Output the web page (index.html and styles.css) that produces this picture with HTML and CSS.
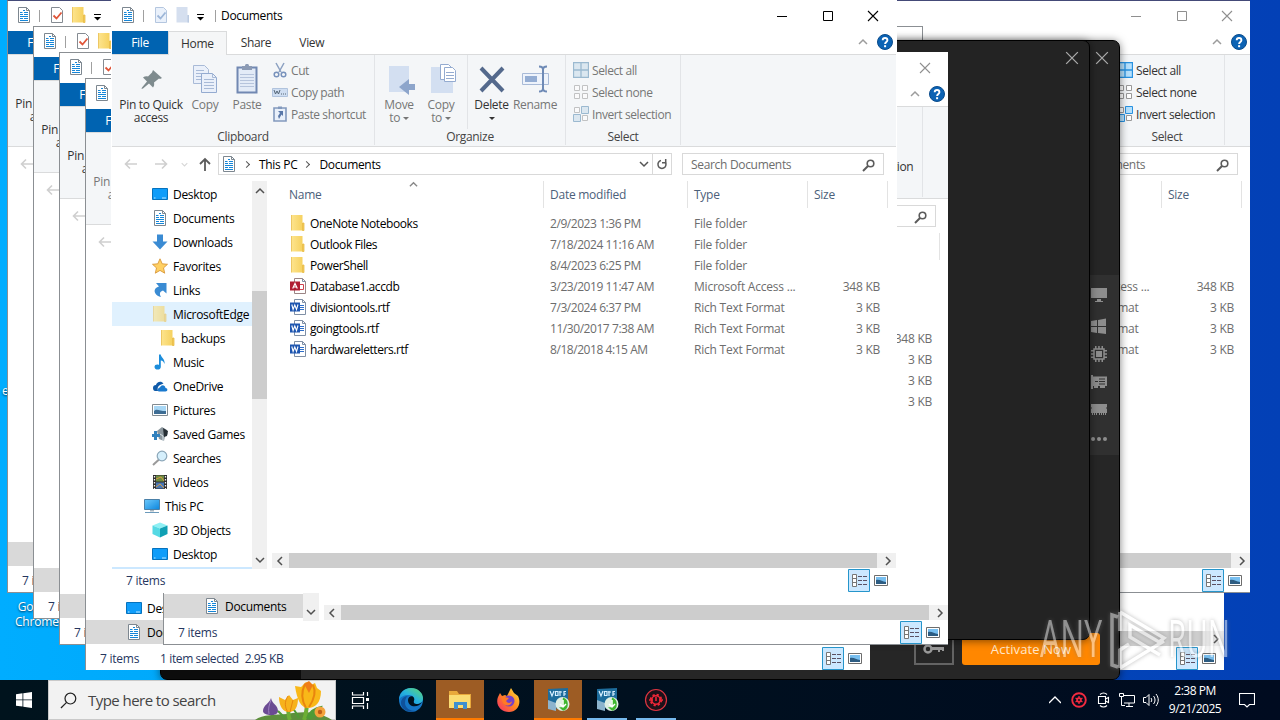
FILE: index.html
```html
<!DOCTYPE html>
<html lang="en">
<head>
<meta charset="UTF-8" />
<meta name="viewport" content="width=device-width, initial-scale=1" />
<title>Documents</title>
<link rel="stylesheet" href="styles.css">
</head>
<body>
  <!-- shared icons -->
  <svg class="sprite" width="0" height="0">
    <defs>
      <linearGradient id="gold" x1="0" x2="1"><stop offset="0" stop-color="#fde48d"/><stop offset="1" stop-color="#f5cf5a"/></linearGradient>
      <linearGradient id="sky" x1="0" y1="0" x2="1" y2="1"><stop offset="0" stop-color="#6cc8fb"/><stop offset="1" stop-color="#0b86de"/></linearGradient>
      <linearGradient id="edge1" x1="0" y1="1" x2="1" y2="0"><stop offset="0" stop-color="#1385dc"/><stop offset=".5" stop-color="#27b4dd"/><stop offset="1" stop-color="#62d86b"/></linearGradient>
      <linearGradient id="fire" x1="1" y1="0" x2="0" y2="1"><stop offset="0" stop-color="#ffe43f"/><stop offset=".5" stop-color="#ff8420"/><stop offset="1" stop-color="#f5286f"/></linearGradient>
    </defs>
    <symbol id="i-doc" viewBox="0 0 16 16"><path d="M2.500 .5h8l3 3v12h-11z" fill="#fff" stroke="#7d8790"/><path d="M10.500 .5v3h3" fill="none" stroke="#7d8790"/><path d="M4 5.500h2.500M8 5.500h4M4 7.500h3M8 7.500h4M4 9.500h8M4 11.500h3M8 11.500h4M4 13.500h8M7 3.500h2" stroke="#1586d8" stroke-width="1.200"/></symbol>
    <symbol id="i-folder" viewBox="0 0 16 16"><path d="M1.500 0h11v8h1.500v7.500H1.500z" fill="url(#gold)"/><path d="M1.500 0v15.500M12.500 8v7.500h1.500V8z" stroke="#e8bc4b" stroke-width=".8" fill="#f3cb56"/></symbol>
    <symbol id="i-check" viewBox="0 0 16 16"><path d="M2.500 .5h8l3 3v12h-11z" fill="#fff" stroke="#858b92"/><path d="M4.500 8.500l3 3 5-6" fill="none" stroke="#e0563a" stroke-width="1.800"/></symbol>
    <symbol id="i-check-off" viewBox="0 0 16 16"><path d="M2.500 .5h8l3 3v12h-11z" fill="#eaf1fb" stroke="#b4c6df"/><path d="M4.500 8.500l3 3 5-6" fill="none" stroke="#9db6d8" stroke-width="1.800"/></symbol>
    <symbol id="i-folder-off" viewBox="0 0 16 16"><path d="M1.500 0h11v8h1.500v7.500H1.500z" fill="#d5dfef"/><path d="M12.500 8v7.500h1.500V8z" fill="#bccbe2"/></symbol>
    <symbol id="i-desktop" viewBox="0 0 16 16"><path d="M.5 2.500h15v11H.5z" fill="#0f9dfa" stroke="#0672bd"/><path d="M2 12h1.500M10 12h4" stroke="#bde6ff"/></symbol>
    <symbol id="i-down" viewBox="0 0 16 16"><path d="M5 .5h6v7h4.500L8 15.500.5 7.500H5z" fill="#3a8bd3"/></symbol>
    <symbol id="i-star" viewBox="0 0 16 16"><path d="M8 .8l2.200 5 5.300.5-4 3.600 1.200 5.300L8 12.400l-4.700 2.800 1.200-5.300-4-3.600 5.300-.5z" fill="#ffd063" stroke="#d8973b" stroke-width=".9"/></symbol>
    <symbol id="i-link" viewBox="0 0 16 16"><path d="M4 1h10.500v10.500L11 8.500c-3 1-4 3-2 6.500-5-1-8-5.500-5.500-8.500C4.500 5.300 6 5 7 4.500z" fill="#3a8bd3"/></symbol>
    <symbol id="i-music" viewBox="0 0 16 16"><path d="M7 .5h1.800c0 3 4.500 4 3.700 9.500-.6-2-1.700-3.300-3.700-3.500V13c0 3.500-6.300 3.300-6.300 0 0-2.400 2.600-3 4.500-2z" fill="#1c8ddb"/></symbol>
    <symbol id="i-cloud" viewBox="0 0 16 16"><path d="M1 10c0-2 1-3 3-3 .5-3 5-5 7.500-1.500L8 7c-2 1-3 3-2 6H3c-1 0-2-1-2-3z" fill="#0f5aa8"/><path d="M6.500 13.500c-1.500-2 0-4 1.500-4C9 6.500 13 6.500 13.500 10c2.500 0 2.500 3.500 0 3.500z" fill="#1979ce"/></symbol>
    <symbol id="i-pic" viewBox="0 0 16 16"><path d="M.5 2.500h15v11H.5z" fill="#fff" stroke="#828b91"/><path d="M2 4h12v8H2z" fill="#a8d7f5"/><path d="M2 9c3-3 5 0 12 0v3H2z" fill="#3e6d94"/></symbol>
    <symbol id="i-games" viewBox="0 0 16 16"><path d="M5 5l5-4 5 3v3l1 1-3 2-1 5-5-2z" fill="#8b969d"/><path d="M11 2l5 3-1 5-3 1z" fill="#272f35"/><path d="M2 5h3v3h3v3H5v3H2v-3H0V8h2z" fill="#3281bd"/><path d="M8 8l3 2v5" stroke="#dbe5ea" fill="none"/></symbol>
    <symbol id="i-search" viewBox="0 0 16 16"><path d="M7 9.500L1 15" stroke="#9a9a9a" stroke-width="2"/><circle cx="10" cy="6" r="4.800" fill="#d5effc" stroke="#8ba6b8" stroke-width="1.200"/></symbol>
    <symbol id="i-film" viewBox="0 0 16 16"><path d="M1 1h14v14H1z" fill="#2e2e2e"/><path d="M4 1.500h8v6H4z" fill="#6e8c42"/><path d="M4 8.500h8v6H4z" fill="#4a78b6"/><path d="M4 5l5-2 3 4M4 13l4-3 4 4" fill="none" stroke="#d49b43"/><path d="M2.500 2v13M13.500 2v13" stroke="#f3f3f3" stroke-width="1.300" stroke-dasharray="1.500 1.500"/></symbol>
    <symbol id="i-pc" viewBox="0 0 16 16"><path d="M.5 1.500h15v10H.5z" fill="url(#sky)" stroke="#4a80a8"/><path d="M6 12h4v1.500H6z" fill="#a8b6c0"/><path d="M1 14.500h14" stroke="#6c9abb"/></symbol>
    <symbol id="i-cube" viewBox="0 0 16 16"><path d="M8 .5l7.500 3L8 6.500.5 3.500z" fill="#8ff0f4"/><path d="M.5 3.500l7.500 3v9L.5 12z" fill="#55d9e4"/><path d="M15.500 3.500L8 6.500v9l7.500-3.500z" fill="#0fa0b4"/></symbol>
    <symbol id="i-word" viewBox="0 0 16 16"><path d="M4.500.5h8l3 3v12h-11z" fill="#fff" stroke="#7f8fa5"/><path d="M12.500.5v3h3" fill="none" stroke="#7f8fa5"/><path d="M10 6.500h4M10 8.500h4M10 10.500h4" stroke="#2f6fca"/><path d="M0 3.500h10v9H0z" fill="#1d55b0"/><path d="M1.800 5.500l1.300 5 1.700-4.500 1.700 4.500 1.500-5" stroke="#fff" fill="none" stroke-width="1.100"/></symbol>
    <symbol id="i-access" viewBox="0 0 16 16"><path d="M4.500.5h8l3 3v12h-11z" fill="#fff" stroke="#9b8585"/><path d="M12.500.5v3h3" fill="none" stroke="#7f8fa5"/><path d="M10 6.500h3.500v5H10" fill="none" stroke="#cf4250"/><path d="M0 3.500h10v9H0z" fill="#b01f33"/><path d="M2.700 10.500l2.300-5 2.300 5M3.500 9h3" stroke="#fff" fill="none" stroke-width="1.200"/></symbol>
    <symbol id="i-back" viewBox="0 0 16 16"><path d="M14 8H3M7 3.500L2.500 8 7 12.500" fill="none" stroke="#cfcfcf" stroke-width="1.600"/></symbol>
    <symbol id="i-mag" viewBox="0 0 16 16"><path d="M7 9L2 14" stroke="#5b5b5b" stroke-width="2"/><circle cx="9.500" cy="6.500" r="3.300" fill="none" stroke="#5b5b5b" stroke-width="1.600"/></symbol>
    <symbol id="i-help" viewBox="0 0 16 16"><circle cx="8" cy="8" r="7.500" fill="#0c63b4" stroke="#0a4c8c"/><path d="M5.700 6.300c0-3 4.700-3 4.700 0C10.400 8 8.100 8 8.100 10" fill="none" stroke="#fff" stroke-width="1.900"/><path d="M7.100 11.200h2v2h-2z" fill="#fff"/></symbol>
    <symbol id="i-close" viewBox="0 0 12 12"><path d="M1 1l10 10M11 1L1 11" stroke="currentColor" stroke-width="1.100"/></symbol>
    <symbol id="i-min" viewBox="0 0 12 12"><path d="M1 6.500h10" stroke="currentColor"/></symbol>
    <symbol id="i-max" viewBox="0 0 12 12"><path d="M1.500 1.500h9v9h-9z" fill="none" stroke="currentColor"/></symbol>
    <symbol id="i-up" viewBox="0 0 10 10"><path d="M1 7l4-4 4 4" fill="none" stroke="currentColor" stroke-width="1.500"/></symbol>
    <symbol id="i-caret" viewBox="0 0 8 8"><path d="M0 .5h7" stroke="currentColor"/><path d="M0 3h7L3.500 6.500z" fill="currentColor"/></symbol>
    <symbol id="i-details" viewBox="0 0 22 23"><path d="M.5.500h21v22H.5z" fill="#cce8ff" stroke="#2695cb"/><path d="M4.500 5.500h4v12h-4zM4.500 9.500h4M4.500 13.500h4" fill="#fff" stroke="#777"/><path d="M10 7.500h4M15 7.500h4M10 11.500h4M15 11.500h4M10 15.500h4M15 15.500h4" stroke="#5b5163"/></symbol>
    <symbol id="i-thumb" viewBox="0 0 14 12"><path d="M.5.500h13v10H.5z" fill="#fff" stroke="#6d6d6d"/><path d="M2 2h10v7H2z" fill="#78bff0"/><path d="M2 5c4-1 6 2 10 2v2H2z" fill="#2d5c82"/></symbol>
    <symbol id="i-selall" viewBox="0 0 16 16"><path d="M.5.500h15v15H.5zM8 0v16M0 8h16" fill="#b5e0fc" stroke="#2791e0" stroke-width="1.300"/></symbol>
    <symbol id="i-selnone" viewBox="0 0 16 16"><path d="M1.500 1.500h5v5h-5zM9.500 1.500h5v5h-5zM1.500 9.500h5v5h-5zM9.500 9.500h5v5h-5z" fill="#fff" stroke="#999"/></symbol>
    <symbol id="i-selinv" viewBox="0 0 16 16"><path d="M1.500 1.500h5v5h-5zM9.500 9.500h5v5h-5z" fill="#fff" stroke="#999"/><path d="M8.500.500h7v7h-7zM.5 8.500h7v7h-7z" fill="#b5e0fc" stroke="#2791e0"/></symbol>
    <symbol id="i-votre" viewBox="0 0 24 24"><path d="M2 1l20-1v14l-9 7-11-3z" fill="#1d6c9c"/><path d="M2 12l8 3v8l-8-2z" fill="#8db4cd"/><path d="M4 3l2 5 2-5M9.500 3.500h2.500v4H9.500zM14 3v5M13 4h3M18 8V3.500h2M18 6h2" stroke="#d9f0ff" fill="none" stroke-width="1.200"/><circle cx="16.500" cy="16" r="7" fill="#dfeee3"/><path d="M17 9.500a7 7 0 0 1 0 13.300l-4-3.500h3z" fill="#3fb62f"/><path d="M17 12v7m-3-3l3 3 3-3" stroke="#fff" stroke-width="1.500" fill="none"/></symbol>
  </svg>

  <div class="desktop">
    <span class="desk-label label-cut">e</span>
    <div class="desk-label label-chrome">Google<br>Chrome</div>

    <!-- lowest window, bottom right -->
    <div class="window win-low">
      <div class="rest"></div>
      <div class="hscroll"><b class="thumb"></b><svg class="arr right"><use href="#i-up"/></svg></div>
      <div class="status"><span class="push"></span><svg class="v-details"><use href="#i-details"/></svg><svg class="v-thumb"><use href="#i-thumb"/></svg></div>
    </div>

    <!-- wide window -->
    <div class="window win-wide idle">
      <div class="titlebar"><svg class="ic"><use href="#i-doc"/></svg><i class="tsep"></i><svg class="ic"><use href="#i-check"/></svg><svg class="ic gap6"><use href="#i-folder"/></svg><svg class="caret"><use href="#i-caret"/></svg>
        <div class="controls"><svg><use href="#i-min"/></svg><svg><use href="#i-max"/></svg><svg><use href="#i-close"/></svg></div>
      </div>
      <div class="tabs"><span class="file">File</span><span class="push"></span><svg class="chev"><use href="#i-up"/></svg><svg class="help"><use href="#i-help"/></svg></div>
      <div class="ribbon">
        <div class="pin-stub">Pin to Quick<br>access</div>
        <div class="group g-select">
          <div class="items"><ul class="small">
            <li><svg><use href="#i-selall"/></svg>Select all</li>
            <li><svg><use href="#i-selnone"/></svg>Select none</li>
            <li><svg><use href="#i-selinv"/></svg>Invert selection</li>
          </ul></div>
          <div class="gname">Select</div>
        </div>
      </div>
      <div class="nav"><svg class="ic16"><use href="#i-back"/></svg><span class="push"></span><div class="search">Search Documents<svg><use href="#i-mag"/></svg></div></div>
      <div class="pane">
        <div class="cols"><span class="c-name"></span><span class="c-date"></span><span class="c-type">Type</span><span class="c-size">Size</span></div>
        <div class="file-row empty"></div>
        <div class="file-row empty"></div>
        <div class="file-row empty"></div>
        <div class="file-row"><span class="type">Microsoft Access ...</span><span class="size">348 KB</span></div>
        <div class="file-row"><span class="type">Rich Text Format</span><span class="size">3 KB</span></div>
        <div class="file-row"><span class="type">Rich Text Format</span><span class="size">3 KB</span></div>
        <div class="file-row"><span class="type">Rich Text Format</span><span class="size">3 KB</span></div>
        <div class="rest"></div>
        <div class="wide-foot"><b class="selrow"></b><div class="hscroll"><b class="thumb"></b><svg class="arr right"><use href="#i-up"/></svg></div></div>
      </div>
      <div class="status"><span>7 items</span><span class="push"></span><svg class="v-details"><use href="#i-details"/></svg><svg class="v-thumb"><use href="#i-thumb"/></svg></div>
    </div>

    <div class="window win-behind idle"></div>

    <!-- cascaded windows, left edge -->
    <div class="window win-two idle">
      <div class="titlebar"><svg class="ic"><use href="#i-doc"/></svg><i class="tsep"></i><svg class="ic"><use href="#i-check"/></svg><svg class="ic gap6"><use href="#i-folder"/></svg></div>
      <div class="tabs"><span class="file">File</span></div>
      <div class="ribbon"><div class="pin-stub">Pin to Quick<br>access</div></div>
      <div class="nav"><svg class="ic16"><use href="#i-back"/></svg></div>
      <div class="rest"></div>
      <b class="selrow"></b>
      <div class="status"><span>7 items</span></div>
    </div>
    <div class="window win-three idle">
      <div class="titlebar"><svg class="ic"><use href="#i-doc"/></svg><i class="tsep"></i><svg class="ic"><use href="#i-check"/></svg></div>
      <div class="tabs"><span class="file">File</span></div>
      <div class="ribbon"><div class="pin-stub">Pin to Quick<br>access</div></div>
      <div class="nav"><svg class="ic16"><use href="#i-back"/></svg></div>
      <div class="rest"></div>
      <b class="selrow"></b>
      <div class="status"><span>7 items</span></div>
    </div>

    <!-- dark application -->
    <div class="dark-app app-main">
      <svg class="app-close"><use href="#i-close"/></svg>
      <div class="side">
        <svg viewBox="0 0 16 16"><path d="M0 1h16v10H0zM6 12h4v2h2v1H4v-1h2z"/></svg>
        <svg viewBox="0 0 16 16"><path d="M0 3l6-1v6H0zM7 2l8-1.500V8H7zM0 9h6v6l-6-1zM7 9h8v7l-8-1z"/></svg>
        <svg viewBox="0 0 16 16"><path d="M3 3h10v10H3z" fill="none" stroke="#8d8d8d" stroke-width="1.500"/><path d="M5 5h6v6H5zM4 0h1.500v3H4zM7.200 0h1.500v3H7.200zM10.500 0H12v3h-1.500zM4 13h1.500v3H4zM7.200 13h1.500v3H7.200zM10.500 13H12v3h-1.500zM0 4h3v1.500H0zM0 7.200h3v1.500H0zM0 10.500h3V12H0zM13 4h3v1.500h-3zM13 7.200h3v1.500h-3zM13 10.500h3V12h-3z"/></svg>
        <svg viewBox="0 0 16 16"><path d="M0 1h2v1.500h14V12h-2v2H9v-2H7v2H3v-2H2v3H0z"/><path d="M4 7.500h3M8 5h6M8 7.500h6M8 10h6" stroke="#303030"/></svg>
        <svg viewBox="0 0 16 16"><path d="M0 2h16v3l-1 1 1 1v4h-1v2h-1v-2h-1v2h-1v-2h-1v2h-1v-2H9v2H8v-2H6v2H5v-2H4v2H3v-2H2v2H1v-2H0V7l1-1-1-1z"/></svg>
        <svg viewBox="0 0 16 16"><circle cx="2" cy="9" r="2"/><circle cx="8" cy="9" r="2"/><circle cx="14" cy="9" r="2"/></svg>
      </div>
      <div class="app-foot">
        <span class="key"><svg viewBox="0 0 22 10"><circle cx="5" cy="5" r="3.500" fill="none" stroke="#999" stroke-width="2.500"/><path d="M8 3h13v4h-2V6h-2v2h-2V6H8z" fill="#999"/></svg></span>
        <span class="activate">Activate Now</span>
      </div>
    </div>
    <div class="dark-app app-dialog"><svg class="app-close"><use href="#i-close"/></svg></div>

    <div class="window win-four idle">
      <div class="titlebar"><svg class="ic"><use href="#i-doc"/></svg></div>
      <div class="tabs"><span class="file">File</span></div>
      <div class="ribbon"><div class="pin-stub dim">Pin to Quick<br>access</div></div>
      <div class="nav"><svg class="ic16"><use href="#i-back"/></svg></div>
      <div class="rest"></div>
      <ul class="tree shallow">
        <li><svg><use href="#i-desktop"/></svg>Desktop</li>
        <li class="picked"><svg><use href="#i-doc"/></svg>Documents</li>
      </ul>
      <div class="status"><span>7 items</span><span class="picked-count">1 item selected</span><span class="bytes">2.95 KB</span><span class="push"></span><svg class="v-details"><use href="#i-details"/></svg><svg class="v-thumb"><use href="#i-thumb"/></svg></div>
    </div>

    <div class="window win-five idle">
      <div class="titlebar"><div class="controls"><svg><use href="#i-close"/></svg></div></div>
      <div class="tabs"><span class="push"></span><svg class="chev"><use href="#i-up"/></svg><svg class="help"><use href="#i-help"/></svg></div>
      <div class="ribbon"><div class="group g-select"><div class="items"><ul class="small"><li></li><li></li><li>Invert selection</li></ul></div></div></div>
      <div class="nav"><span class="push"></span><div class="search"><svg><use href="#i-mag"/></svg></div></div>
      <div class="pane">
        <div class="cols"><span class="c-name"></span><span class="c-size"></span></div>
        <div class="file-row empty"></div>
        <div class="file-row empty"></div>
        <div class="file-row empty"></div>
        <div class="file-row"><span class="size">348 KB</span></div>
        <div class="file-row"><span class="size">3 KB</span></div>
        <div class="file-row"><span class="size">3 KB</span></div>
        <div class="file-row"><span class="size">3 KB</span></div>
        <div class="rest"></div>
        <div class="foot-row">
          <ul class="tree"><li class="picked"><svg><use href="#i-doc"/></svg>Documents</li></ul>
          <span class="vend"><svg class="arr down"><use href="#i-up"/></svg></span>
          <div class="hscroll"><svg class="arr left"><use href="#i-up"/></svg><b class="thumb"></b><svg class="arr right"><use href="#i-up"/></svg></div>
        </div>
      </div>
      <div class="status"><span>7 items</span><span class="push"></span><svg class="v-details"><use href="#i-details"/></svg><svg class="v-thumb"><use href="#i-thumb"/></svg></div>
    </div>

    <!-- active window -->
    <div class="window win-front">
      <div class="titlebar">
        <svg class="ic"><use href="#i-doc"/></svg><i class="tsep"></i>
        <svg class="ic"><use href="#i-check-off"/></svg><svg class="ic gap6"><use href="#i-folder-off"/></svg><svg class="caret"><use href="#i-caret"/></svg><i class="tsep t2"></i>
        <span class="title">Documents</span>
        <div class="controls"><svg><use href="#i-min"/></svg><svg><use href="#i-max"/></svg><svg><use href="#i-close"/></svg></div>
      </div>
      <div class="tabs">
        <span class="file">File</span><span class="tab on">Home</span><span class="tab">Share</span><span class="tab">View</span>
        <span class="push"></span><svg class="chev"><use href="#i-up"/></svg><svg class="help"><use href="#i-help"/></svg>
      </div>
      <div class="ribbon">
        <div class="group g-clip">
          <div class="items">
            <div class="big b-pin live"><svg viewBox="0 0 32 32"><path d="M18 6l9 8-2 1-1-.5-5 4c.5 2 0 4-1 5l-4-4-6 5-1.500.5.5-1.500 5-6-4-4c1.500-1 3-1.500 5-1l4-4z" fill="#7e8b8e"/></svg><span>Pin to Quick<br>access</span></div>
            <div class="big b-copy"><svg viewBox="0 0 32 32"><path d="M4.500 1.500h11l4 4v14h-15z" fill="#eaf0fa" stroke="#a8bad7"/><path d="M7 6.500h8M7 9.500h10M7 12.500h5M7 15.500h5" stroke="#a8bad7"/><path d="M12.500 9.500h11l4 4v15h-15z" fill="#eaf0fa" stroke="#94abd0"/><path d="M23.500 9.500v4h4M15 15.500h10M15 18.500h10M15 21.500h10M15 24.500h10" fill="none" stroke="#a8bad7"/></svg><span>Copy</span></div>
            <div class="big b-paste"><svg viewBox="0 0 32 32"><path d="M6.500 3.500h19v25h-19z" fill="#e3ebf7" stroke="#7188b2" stroke-width="2"/><path d="M11 2h3c0-3 4-3 4 0h3v4H11z" fill="#8b9ab4"/><path d="M9 10.500h14M9 13.500h14M9 16.500h14M9 19.500h14M9 22.500h14" stroke="#b6c4dc"/></svg><span>Paste</span></div>
            <ul class="small">
              <li><svg viewBox="0 0 16 16"><path d="M4 1l5 9M12 1L7 10" stroke="#8ba0c1" stroke-width="1.500"/><circle cx="4.500" cy="12.500" r="2.300" fill="none" stroke="#7892bc" stroke-width="1.500"/><circle cx="11.500" cy="12.500" r="2.300" fill="none" stroke="#7892bc" stroke-width="1.500"/></svg>Cut</li>
              <li><svg viewBox="0 0 16 16"><path d="M.5 4.500h15v8H.5z" fill="#cfdef2" stroke="#b0c3dd"/><path d="M2 6l1.500 4L5 7l1.500 3L8 6M9 10h1M11 10h1M13 10h1" stroke="#567" fill="none"/></svg>Copy path</li>
              <li><svg viewBox="0 0 16 16"><path d="M2 2h12v13H2z" fill="#e9f0fa" stroke="#8299bd" stroke-width="1.600"/><path d="M6 .5h4v2.500H6z" fill="#8299bd"/><path d="M6 5h5v5L9.500 8.500 7 13l-1-3 2-3z" fill="#5977a8"/></svg>Paste shortcut</li>
            </ul>
          </div>
          <div class="gname">Clipboard</div>
        </div>
        <div class="group g-org">
          <div class="items">
            <div class="big b-move"><svg viewBox="0 0 32 32"><path d="M6 2h20v26H6z" fill="#d3dff1"/><path d="M32 20h-6v-5l-10 8 10 8v-5h6z" fill="#8da5cb"/></svg><span>Move<br>to <i class="dd"></i></span></div>
            <div class="big b-copyto"><svg viewBox="0 0 32 32"><path d="M6 3h22v26H6z" fill="#d3dff1"/><path d="M15.500.500h8l3 3v12h-11z" fill="#fff" stroke="#94abd0"/><path d="M19.500 3.500h8l3 3v11h-11z" fill="#fff" stroke="#94abd0"/><path d="M21 8.500h8M21 11.500h8M21 14.500h8" stroke="#94abd0"/></svg><span>Copy<br>to <i class="dd"></i></span></div>
            <div class="big b-del live"><svg viewBox="0 0 32 32"><path d="M5 4l22 23M27 4L5 27" stroke="#54698c" stroke-width="4"/></svg><span>Delete<br><i class="dd"></i></span></div>
            <div class="big b-ren"><svg viewBox="0 0 32 32"><path d="M3.500 9.500h26v11h-26z" fill="#eef3fb" stroke="#a8bad7"/><path d="M6 12h12v6H6z" fill="#94add3"/><path d="M20 2.500c3 0 4 1 4 3v19c0 2-1 3-4 3M28 2.500c-3 0-4 1-4 3M28 27.500c-3 0-4-1-4-3" fill="none" stroke="#6e8ab6" stroke-width="2"/></svg><span>Rename</span></div>
          </div>
          <div class="gname">Organize</div>
        </div>
        <div class="group g-select faded">
          <div class="items"><ul class="small">
            <li><svg><use href="#i-selall"/></svg>Select all</li>
            <li><svg><use href="#i-selnone"/></svg>Select none</li>
            <li><svg><use href="#i-selinv"/></svg>Invert selection</li>
          </ul></div>
          <div class="gname">Select</div>
        </div>
      </div>
      <div class="nav">
        <svg class="ic16"><use href="#i-back"/></svg><svg class="ic16 flip"><use href="#i-back"/></svg><svg class="mini-chev"><use href="#i-up"/></svg>
        <svg class="up" viewBox="0 0 16 16"><path d="M8 15V3M3 8l5-5 5 5" fill="none" stroke="#5c5c5c" stroke-width="1.800"/></svg>
        <div class="address"><svg class="ic"><use href="#i-doc"/></svg><i class="sep"></i><span>This PC</span><i class="sep"></i><span>Documents</span><span class="push"></span><svg class="drop"><use href="#i-up"/></svg><div class="refresh"><svg viewBox="0 0 14 14"><path d="M10.500 5.500A4 4 0 1 1 6 3.500" fill="none" stroke="#5c5c5c" stroke-width="1.500"/><path d="M10.700 2v3.800H7" fill="none" stroke="#5c5c5c" stroke-width="1.500"/></svg></div></div>
        <div class="search">Search Documents<svg><use href="#i-mag"/></svg></div>
      </div>
      <div class="content">
        <ul class="tree">
          <li><svg><use href="#i-desktop"/></svg>Desktop</li>
          <li><svg><use href="#i-doc"/></svg>Documents</li>
          <li><svg><use href="#i-down"/></svg>Downloads</li>
          <li><svg><use href="#i-star"/></svg>Favorites</li>
          <li><svg><use href="#i-link"/></svg>Links</li>
          <li class="hover"><svg class="pale"><use href="#i-folder"/></svg>MicrosoftEdge</li>
          <li class="deep"><svg><use href="#i-folder"/></svg>backups</li>
          <li><svg><use href="#i-music"/></svg>Music</li>
          <li><svg><use href="#i-cloud"/></svg>OneDrive</li>
          <li><svg><use href="#i-pic"/></svg>Pictures</li>
          <li><svg><use href="#i-games"/></svg>Saved Games</li>
          <li><svg><use href="#i-search"/></svg>Searches</li>
          <li><svg><use href="#i-film"/></svg>Videos</li>
          <li class="root"><svg><use href="#i-pc"/></svg>This PC</li>
          <li><svg><use href="#i-cube"/></svg>3D Objects</li>
          <li><svg><use href="#i-desktop"/></svg>Desktop</li>
          <li class="next"></li>
        </ul>
        <div class="vscroll"><svg class="arr"><use href="#i-up"/></svg><b class="vthumb"></b><svg class="arr down"><use href="#i-up"/></svg></div>
        <div class="pane">
          <div class="cols"><span class="c-name">Name<svg><use href="#i-up"/></svg></span><span class="c-date">Date modified</span><span class="c-type">Type</span><span class="c-size">Size</span></div>
          <div class="file-row"><svg><use href="#i-folder"/></svg><span class="name">OneNote Notebooks</span><span class="date">2/9/2023 1:36 PM</span><span class="type">File folder</span><span class="size"></span></div>
          <div class="file-row"><svg><use href="#i-folder"/></svg><span class="name">Outlook Files</span><span class="date">7/18/2024 11:16 AM</span><span class="type">File folder</span><span class="size"></span></div>
          <div class="file-row"><svg><use href="#i-folder"/></svg><span class="name">PowerShell</span><span class="date">8/4/2023 6:25 PM</span><span class="type">File folder</span><span class="size"></span></div>
          <div class="file-row"><svg><use href="#i-access"/></svg><span class="name">Database1.accdb</span><span class="date">3/23/2019 11:47 AM</span><span class="type">Microsoft Access ...</span><span class="size">348 KB</span></div>
          <div class="file-row"><svg><use href="#i-word"/></svg><span class="name">divisiontools.rtf</span><span class="date">7/3/2024 6:37 PM</span><span class="type">Rich Text Format</span><span class="size">3 KB</span></div>
          <div class="file-row"><svg><use href="#i-word"/></svg><span class="name">goingtools.rtf</span><span class="date">11/30/2017 7:38 AM</span><span class="type">Rich Text Format</span><span class="size">3 KB</span></div>
          <div class="file-row"><svg><use href="#i-word"/></svg><span class="name">hardwareletters.rtf</span><span class="date">8/18/2018 4:15 AM</span><span class="type">Rich Text Format</span><span class="size">3 KB</span></div>
          <div class="rest"></div>
          <div class="hscroll"><svg class="arr left"><use href="#i-up"/></svg><b class="thumb"></b><svg class="arr right"><use href="#i-up"/></svg></div>
        </div>
      </div>
      <div class="status"><span>7 items</span><span class="push"></span><svg class="v-details"><use href="#i-details"/></svg><svg class="v-thumb"><use href="#i-thumb"/></svg></div>
    </div>

    <svg class="watermark" viewBox="0 0 200 70">
      <text x="4" y="50" textLength="62" lengthAdjust="spacingAndGlyphs">ANY</text>
      <path d="M82 10l-6-2v50l6 2M84 5l44 26-5 4-29-17v12l30 18M84 5v19M84 61l44-27M84 61V43l9-6" fill="none" stroke="#fff" stroke-width="3.500"/>
      <text x="132" y="50" textLength="62" lengthAdjust="spacingAndGlyphs">RUN</text>
    </svg>
  </div>

  <div class="taskbar">
    <div class="start"><svg viewBox="0 0 16 16"><path d="M0 2.200l6.500-.9v6.200H0zM7.300 1.200L16 0v7.500H7.300zM0 8.300h6.500v6.300L0 13.700zM7.300 8.300H16V16l-8.700-1.200z" fill="#fff"/></svg></div>
    <div class="searchbox">
      <svg class="glass" viewBox="0 0 18 18"><circle cx="11" cy="7" r="5.700" fill="none" stroke="#222" stroke-width="1.300"/><path d="M7 11l-6 6" stroke="#222" stroke-width="1.300"/></svg>
      <span>Type here to search</span>
      <svg class="flowers" viewBox="0 0 80 40">
        <path d="M0 40c8-6 20-5 32-6 14-3 32-3 45 6z" fill="#5d8f3c"/>
        <path d="M16 18c-1 5-8 7-8 13 0 5 15 6 15 0 0-6-6-7-7-13z" fill="#6b4b93"/><path d="M16 20c-2 5-3 9-2 14" stroke="#9c7fc0" fill="none"/>
        <path d="M33 30c1 4 0 6 2 10M52 26c-1 5-1 9-3 14" stroke="#6cae35" stroke-width="4"/><path d="M44 38c-3-6-5-9-8-11M52 38c3-7 8-10 14-11-3 6-6 9-12 12M30 38l-7-7" fill="#4f9b36" stroke="#4f9b36" stroke-width="2"/>
        <path d="M24 17l6 3 4-5 4 5 5-2c0 9-3 14-9 14s-10-6-10-15z" fill="#f7b21c"/><path d="M33 16c-4 6-3 12 0 16M38 20l-3 12" stroke="#e78610" fill="none"/>
        <path d="M40 6l6 1 5-5 5 3 4-2 2 5 4 3c0 12-6 17-13 17S42 20 40 6z" fill="#f9b818"/><path d="M50 4c-4 8-3 17 1 24M58 5c4 8 0 16-4 22" stroke="#e9850e" stroke-width="2" fill="none"/><path d="M49 4l5-3 4 4-4 8z" fill="#ef7d19"/>
        <circle cx="65" cy="32" r="5.500" fill="#f3a33b"/><circle cx="65" cy="32" r="2.200" fill="#bd5d15"/>
      </svg>
    </div>
    <div class="task view"><svg viewBox="0 0 18 18"><path d="M1.500 1v3h11V1M1.500 6.500h11v6h-11zM1.500 18v-3h11v3M16.500 1v4M16.500 12v6" fill="none" stroke="#fff" stroke-width="1.200"/><path d="M15 7h3v3h-3z" fill="#fff"/></svg></div>
    <div class="task"><svg viewBox="0 0 24 24"><circle cx="12" cy="12" r="12" fill="#1576c6"/><path d="M0 12C0 5 5 0 12 0c7 0 12 5 12 10 0 4-3 6-7 6-2 0-3-1-2-3 1-3-1-6-5-6-5 0-9 2-10 5z" fill="url(#edge1)"/><path d="M9 12c0-4 5-5 6-2 1 2-1 3 0 5 2 2 6 1 8-1-3 6-14 6-14-2z" fill="#00131f"/><path d="M6 15c0 5 5 8 11 8-9 3-15-3-15-8 0-4 3-7 7-7-2 1-3 4-3 7z" fill="#0f529b"/></svg></div>
    <div class="task active"><svg viewBox="0 0 24 24"><path d="M1 3h8l2 3h12v14H1z" fill="#e9a93b"/><path d="M1 7h21v13H1z" fill="#fbdc73"/><path d="M6 21v-7h13v7h-4v-4h-5v4z" fill="#3f8fcf"/></svg></div>
    <div class="task"><svg viewBox="0 0 24 24"><path d="M3 5l2 3 3-1 2 1 2-4 2-4 3 5 4 3c4 8-1 16-9 16S-2 17 1 9z" fill="url(#fire)"/><circle cx="12" cy="13" r="5.500" fill="#7541c8"/><path d="M4 9c4-1 6 1 8 1l-3 3c2 3 5 2 6 0 0 5-7 6-9 2z" fill="#ff7a25"/></svg></div>
    <div class="task active"><svg><use href="#i-votre"/></svg></div>
    <div class="task open"><svg><use href="#i-votre"/></svg></div>
    <div class="task open"><svg viewBox="0 0 24 24"><circle cx="12" cy="12" r="10.500" fill="#1d1119" stroke="#dc3541" stroke-width="1.200"/><circle cx="12" cy="12" r="5.300" fill="none" stroke="#ee2737" stroke-width="2" stroke-dasharray="2.200 1.960"/><circle cx="12" cy="12" r="4.200" fill="none" stroke="#ee2737" stroke-width="1.500"/><path d="M12 9v4M5 12h4M15 12h4" stroke="#ee2737" stroke-width="1.600"/></svg></div>
    <div class="tray">
      <svg class="t-up" viewBox="0 0 12 12"><path d="M0 9l6-6 6 6" fill="none" stroke="#fff" stroke-width="1.300"/></svg>
      <svg viewBox="0 0 16 16"><circle cx="8" cy="8" r="6.800" fill="none" stroke="#f12b40" stroke-width="1.900"/><circle cx="8" cy="8" r="2" fill="none" stroke="#f12b40" stroke-width="1.600"/><path d="M8 4v8M4.500 6l7 4M11.500 6l-7 4" stroke="#f12b40" stroke-width="1.300"/><circle cx="8" cy="8" r="1" fill="#111"/></svg>
      <svg viewBox="0 0 16 16"><path d="M3.500 4.500h7v7h-7zM10.500 7l3-1.500v5L10.500 9M5 2.500c2-2 5-2 7 0M5 13.500c2 2 5 2 7 0" fill="none" stroke="#fff" stroke-width="1.100"/></svg>
      <svg viewBox="0 0 16 16"><path d="M5 3.500h10.500v7.500H5M10 11v3M7 14.500h7M.5 1.500h4v3h-4zM2.500 5v8.500H6" fill="none" stroke="#fff"/></svg>
      <svg viewBox="0 0 16 16"><path d="M.5 5.500h2.500l3-3v11l-3-3H.5zM8 6c1 1.500 1 2.500 0 4M10.500 4c2 2.500 2 5.500 0 8M13 2c3 4 3 8 0 12" fill="none" stroke="#fff"/></svg>
      <div class="clock">2:38 PM<br>9/21/2025</div>
      <svg class="note" viewBox="0 0 16 16"><path d="M.5 1.500h15v11h-5L8 15l-2.500-2.500h-5z" fill="none" stroke="#fff" stroke-width="1.100"/></svg>
    </div>
  </div>
</body>
</html>
```
FILE: styles.css
```css
:root {
  --line: #dadbdc;
  --ribbon: #f5f6f7;
  --file: #0063b1;
  --muted: #6d6d6d;
  --head: #4c607a;
  --status: #26365f;
}
* {
  box-sizing: border-box;
}
body {
  margin: 0;
  width: 1280px;
  height: 720px;
  overflow: hidden;
  font-family: "Open Sans", "Noto Sans", sans-serif;
  font-size: 12px;
  line-height: 16px;
  letter-spacing: -0.32px;
  color: #000;
}
ul {
  list-style: none;
  margin: 0;
  padding: 0;
}
svg {
  display: block;
  flex: none;
}
.sprite {
  position: absolute;
}
.desktop {
  position: relative;
  height: 680px;
  overflow: hidden;
  background: linear-gradient(90deg, #00adff 0, #00a9fb 180px, #0344b8 1100px, #0340b6 100%);
}
.desk-label {
  position: absolute;
  color: #fff;
  text-align: center;
  line-height: 15px;
  text-shadow: 0 1px 2px #035;
}
.label-cut {
  left: 2px;
  top: 383px;
}
.label-chrome {
  left: 15px;
  top: 599px;
  letter-spacing: -0.2px;
}

/* windows */
.window {
  position: absolute;
  display: flex;
  flex-direction: column;
  overflow: hidden;
  background: #fff;
  border: 1px solid #8b8f93;
  height: 593px;
  width: 786px;
}
.win-low { left: 438px; top: 78px; width: 786px; height: 592px; border-color: #fff; border-right: 0; border-bottom: 0; }
.win-wide { left: 7px; top: 0; width: 1243px; border-top-color: #444a78; border-right: 0; }
.win-behind { left: 137px; top: 26px; }
.win-two { left: 33px; top: 26px; }
.win-three { left: 59px; top: 52px; }
.win-four { left: 85px; top: 78px; width: 785px; height: 592px; border-bottom: 0; border-right: 0; }
.win-five { left: 163px; top: 52px; width: 785px; border-top-color: #fff; border-right: 0; }
.win-front { left: 111px; top: 0; border-color: #fff; border-top: 0; padding-top: 1px; }

.titlebar {
  display: flex;
  align-items: center;
  height: 30px;
  flex: none;
  padding-left: 8px;
}
.ic, .ic16 {
  width: 16px;
  height: 16px;
}
.titlebar .ic {
  margin-bottom: 2px;
}
.tsep {
  width: 1px;
  height: 12px;
  background: #a0a0a0;
  margin: 0 9px 0 7px;
}
.tsep.t2 {
  margin: 0 5px 0 10px;
}
.gap6 {
  margin-left: 6px;
}
.caret {
  width: 8px;
  height: 8px;
  margin: 3px 0 0 7px;
}
.win-front .caret {
  margin-left: 6px;
}
.controls {
  display: flex;
  margin-left: auto;
  gap: 33.500px;
  padding-right: 17px;
}
.controls svg {
  width: 12px;
  height: 12px;
}
.idle .controls {
  color: #8f8f8f;
}
.tabs {
  display: flex;
  height: 24px;
  flex: none;
  border-bottom: 1px solid var(--line);
}
.file {
  width: 56px;
  background: var(--file);
  color: #fff;
  text-align: center;
  line-height: 23px;
}
.tab {
  padding: 0 14px;
  line-height: 23px;
  color: #333;
}
.tab.on {
  padding: 0 12px;
  height: 24px;
  background: var(--ribbon);
  border: 1px solid var(--line);
  border-bottom: 0;
}
.push {
  flex: 1;
}
.chev {
  width: 10px;
  height: 10px;
  margin: 6px 9px 0 0;
  color: #9c9c9c;
}
.help {
  width: 16px;
  height: 16px;
  margin: 3px 3px 0 0;
}
.ribbon {
  display: flex;
  height: 92px;
  flex: none;
  background: #f4f6f8;
  border-bottom: 1px solid var(--line);
  color: #333;
}
.pin-stub {
  width: 78px;
  padding-top: 42px;
  line-height: 13px;
  text-align: center;
  white-space: nowrap;
}
.pin-stub.dim {
  color: #777;
}
.group {
  display: flex;
  flex-direction: column;
  height: 90px;
  border-right: 1px solid #e2e4e7;
}
.items {
  display: flex;
  height: 75px;
}
.gname {
  text-align: center;
  color: #444;
}
.g-clip { width: 263px; }
.g-org { width: 191px; }
.g-select { width: 115px; }
.win-wide .g-select {
  margin-left: auto;
  margin-right: 25px;
}
.win-five .g-select {
  margin-left: auto;
  margin-right: 25px;
}
.small {
  padding-top: 4px;
  letter-spacing: -0.4px;
}
.small li {
  display: flex;
  align-items: center;
  height: 22px;
  gap: 3px;
  white-space: nowrap;
  padding-top: 2px;
}
.small svg {
  width: 16px;
  height: 16px;
  margin-top: -2px;
}
.g-select .small {
  padding-left: 7px;
}
.win-five .small li {
  padding-left: 19px;
}
.big {
  display: flex;
  flex-direction: column;
  align-items: center;
  padding-top: 9px;
  line-height: 13px;
  text-align: center;
  white-space: nowrap;
}
.big svg {
  width: 32px;
  height: 32px;
  margin-bottom: 2px;
}
.big, .g-clip .small, .faded .small {
  color: #767676;
}
.faded svg {
  opacity: .55;
  filter: saturate(.5);
}
.big.live {
  color: #333;
}
.b-pin { width: 78px; }
.b-copy { width: 30px; }
.b-paste { width: 54px; }
.g-clip .small { margin-left: -2px; }
.b-move { width: 48px; }
.b-copyto { width: 36px; }
.b-del { width: 48px; margin-left: 8px; border-left: 1px solid #e2e4e7; }
.b-ren { width: 40px; }
.dd {
  display: inline-block;
  border: 3px solid transparent;
  border-top-color: currentColor;
  border-bottom: 0;
  vertical-align: middle;
}

/* address row */
.nav {
  display: flex;
  align-items: center;
  height: 34px;
  flex: none;
  padding: 0 12px 0 11px;
}
.flip {
  transform: scaleX(-1);
  margin-left: 14px;
}
.mini-chev {
  width: 7px;
  height: 7px;
  transform: scaleY(-1);
  color: #d6d6d6;
  margin-left: 12px;
}
.nav .up {
  width: 16px;
  height: 16px;
  margin: 0 5px 0 9px;
}
.address {
  display: flex;
  align-items: center;
  width: 454px;
  height: 22px;
  border: 1px solid #d9d9d9;
  padding-left: 2px;
}
.address span {
  padding-top: 1px;
}
.sep {
  width: 5px;
  height: 5px;
  border: solid #555;
  border-width: 1.500px 1.500px 0 0;
  transform: rotate(45deg);
  margin: 0 10px 0 7px;
}
.drop {
  width: 10px;
  height: 10px;
  transform: scaleY(-1);
  color: #555;
  margin-right: 3px;
}
.refresh {
  width: 19px;
  height: 20px;
  border-left: 1px solid #d9d9d9;
  padding: 3px 0 0 2px;
}
.refresh svg {
  width: 14px;
  height: 14px;
}
.search {
  display: flex;
  align-items: center;
  justify-content: space-between;
  width: 202px;
  height: 22px;
  margin-left: 10px;
  border: 1px solid #d9d9d9;
  padding: 1px 6px 0 8px;
  color: var(--muted);
}
.search svg {
  width: 16px;
  height: 16px;
  margin-left: auto;
}

/* folder tree */
.content {
  display: flex;
  flex: 1;
  min-height: 0;
}
.tree {
  width: 140px;
  overflow: hidden;
  flex: none;
}
.tree li {
  display: flex;
  align-items: center;
  gap: 5px;
  height: 24px;
  padding-left: 40px;
  padding-top: 2px;
  white-space: nowrap;
}
.content .tree {
  padding-top: 1px;
}
.tree svg {
  width: 16px;
  height: 16px;
  margin-top: -2px;
}
.tree .deep { padding-left: 48px; }
.tree .root { padding-left: 32px; }
.tree .hover { background: #e0f1fe; }
.tree .next { background: #cce8ff; margin-top: 1px; }
.tree .picked, .selrow { background: #d9d9d9; }
.pale { opacity: .6; }
.selrow {
  display: block;
  height: 24px;
  flex: none;
}
.shallow {
  width: 100%;
}
.idle > .selrow, .shallow {
  margin-bottom: 3px;
}
.vscroll {
  display: flex;
  flex-direction: column;
  align-items: center;
  width: 15px;
  background: #f0f0f0;
  padding: 5px 0 4px;
}
.arr {
  width: 10px;
  height: 10px;
  color: #505050;
}
.arr.down { transform: rotate(180deg); }
.arr.left { transform: rotate(-90deg); margin: 0 4px 0 3px; }
.arr.right { transform: rotate(90deg); margin: 0 3px 0 6px; }
.vthumb {
  width: 15px;
  height: 108px;
  margin: 95px 0 auto;
  background: #cdcdcd;
}

/* file list */
.pane {
  display: flex;
  flex-direction: column;
  flex: 1;
  min-height: 0;
}
.content .pane {
  margin-left: 5px;
}
.cols {
  display: flex;
  height: 27px;
  flex: none;
  color: var(--head);
  line-height: 28px;
  margin-bottom: 5px;
  letter-spacing: -0.25px;
}
.cols span {
  border-right: 1px solid #e3e3e3;
}
.c-name {
  position: relative;
  flex: 1;
  padding-left: 17px;
}
.c-name svg {
  position: absolute;
  left: 137px;
  top: -1px;
  width: 9px;
  height: 9px;
  color: #888;
}
.c-date { width: 144px; padding-left: 6px; }
.c-type { width: 120px; padding-left: 6px; }
.c-size { width: 80px; padding-left: 6px; margin-right: 8px; }
.file-row {
  display: flex;
  align-items: center;
  justify-content: flex-end;
  height: 21px;
  flex: none;
  padding: 1px 16px 0 0;
  color: var(--muted);
  white-space: nowrap;
}
.file-row svg {
  width: 16px;
  height: 16px;
  margin: -2px 4px 0 18px;
}
.name { flex: 1; color: #000; letter-spacing: -0.42px; }
.date { width: 144px; letter-spacing: -0.44px; }
.type { width: 114px; letter-spacing: -0.22px; }
.size { width: 72px; text-align: right; letter-spacing: -0.25px; }
.rest { flex: 1; }
.hscroll {
  display: flex;
  align-items: center;
  flex: 1 0 auto;
  height: 15px;
  background: #f0f0f0;
}
.pane > .hscroll {
  flex: none;
  margin-bottom: 1px;
}
.win-low .hscroll {
  flex: none;
  margin-bottom: 1px;
}
.thumb {
  flex: 1;
  height: 15px;
  background: #cdcdcd;
}
.wide-foot {
  display: flex;
  align-items: flex-end;
  height: 27px;
  padding-bottom: 1px;
}
.wide-foot .selrow {
  width: 140px;
  margin-bottom: 2px;
}
.foot-row {
  display: flex;
  align-items: flex-end;
  height: 28px;
}
.foot-row .tree {
  width: 139px;
  align-self: flex-start;
  margin-top: 1px;
}
.foot-row .vend {
  width: 16px;
  height: 28px;
  background: #f0f0f0;
  padding: 14px 3px 0;
}
.foot-row .hscroll {
  margin: 0 0 1px 5px;
}
.status {
  display: flex;
  align-items: center;
  height: 23px;
  flex: none;
  padding: 0 0 0 14px;
  color: var(--status);
  letter-spacing: -0.25px;
}
.status span {
  padding-top: 1px;
}
.picked-count { margin-left: 21px; letter-spacing: -0.4px; }
.bytes { margin-left: 6px; letter-spacing: -0.5px; }
.v-details {
  width: 22px;
  height: 23px;
}
.v-thumb {
  width: 14px;
  height: 12px;
  margin: 0 8px 0 4px;
}

/* dark application */
.dark-app {
  position: absolute;
  background: #232323;
  border: 1px solid #000;
  border-radius: 7px;
  box-shadow: 0 1px 8px rgba(0,0,0,0.5);
  color: #aaa;
}
.app-main {
  display: flex;
  flex-direction: column;
  left: 160px;
  top: 40px;
  width: 960px;
  height: 640px;
  background: linear-gradient(90deg, #0c0c0c 140px, #262626 140px);
}
.app-dialog {
  left: 130px;
  top: 40px;
  width: 960px;
  height: 600px;
}
.app-close {
  width: 14px;
  height: 14px;
  margin: 10px 10px 0 auto;
}
.side {
  display: flex;
  flex-direction: column;
  gap: 12px;
  width: 60px;
  height: 180px;
  margin: 210px 0 0 auto;
  padding: 12px 0 0 32px;
  background: #303030;
  fill: #8d8d8d;
}
.side svg {
  width: 16px;
  height: 16px;
}
.side svg:first-child { margin-bottom: 3px; }
.app-foot {
  display: flex;
  justify-content: flex-end;
  gap: 8px;
  margin: auto 19px 14px 0;
}
.key {
  width: 40px;
  height: 32px;
  border: 2px solid #636363;
  padding: 9px 7px;
}
.key svg {
  width: 22px;
  height: 10px;
}
.activate {
  width: 138px;
  height: 32px;
  background: #ff8700;
  border-radius: 3px;
  color: #ffe7cd;
  font-size: 13px;
  line-height: 32px;
  text-align: center;
  letter-spacing: 0.1px;
}
.watermark {
  position: absolute;
  left: 1036px;
  top: 607px;
  width: 200px;
  height: 70px;
  opacity: .5;
  fill: #fff;
  font-size: 51px;
  font-family: "Open Sans", sans-serif;
  letter-spacing: 0;
  filter: drop-shadow(0 0 2px #777);
}

/* taskbar */
.taskbar {
  display: flex;
  height: 40px;
  background: linear-gradient(90deg, #00131d, #00101f 50%, #000b20);
}
.start {
  width: 48px;
  padding: 12px 16px;
}
.start svg {
  width: 16px;
  height: 16px;
}
.searchbox {
  display: flex;
  align-items: center;
  width: 288px;
  background: #f2f2f2;
  border: 1px solid #c9c9c9;
  color: #444;
  font-size: 15px;
  letter-spacing: -0.55px;
  padding-left: 11px;
}
.glass {
  width: 17px;
  height: 17px;
  margin-right: 11px;
}
.flowers {
  width: 80px;
  height: 40px;
  margin-left: auto;
}
.task {
  width: 48px;
  margin-right: 1px;
  padding: 8px 12px;
}
.task svg {
  width: 24px;
  height: 24px;
}
.task.view {
  padding: 11px 15px;
  margin-right: 3px;
}
.task.view svg {
  width: 18px;
  height: 18px;
}
.active {
  background: #9d5c24;
  border-bottom: 2px solid #ff7a00;
}
.open {
  background: linear-gradient(#76b9ed, #76b9ed) center bottom / 40px 2px no-repeat;
}
.tray {
  display: flex;
  align-items: center;
  gap: 8px;
  margin-left: auto;
  padding-right: 25px;
  color: #fff;
}
.tray svg {
  width: 16px;
  height: 16px;
}
.tray .t-up {
  width: 12px;
  height: 12px;
  margin-right: 2px;
}
.clock {
  width: 56px;
  margin-left: 0;
  text-align: center;
  line-height: 18px;
  letter-spacing: -0.5px;
}
.tray .note {
  margin-left: 8px;
}
```
